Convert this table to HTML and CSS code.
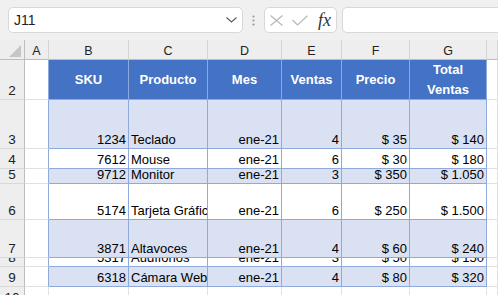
FILE: index.html
```html
<!DOCTYPE html>
<html lang="es">
<head>
<meta charset="utf-8">
<title>Hoja</title>
<link rel="stylesheet" href="styles.css">
</head>
<body>
<div class="toolbar">
  <div class="namebox">
    <span class="nb-text">J11</span>
    <svg class="chev" width="11" height="6" viewBox="0 0 11 6"><polyline points="0.5,0.5 5.5,5 10.5,0.5" fill="none" stroke="#5a5a5a" stroke-width="1.1"/></svg>
  </div>
  <div class="dots">
    <svg width="3" height="11" viewBox="0 0 3 11"><circle cx="1.5" cy="1.5" r="1.1" fill="#9a9a9a"/><circle cx="1.5" cy="5.5" r="1.1" fill="#9a9a9a"/><circle cx="1.5" cy="9.5" r="1.1" fill="#9a9a9a"/></svg>
  </div>
  <div class="fxbox">
    <svg class="ic-x" width="13" height="11" viewBox="0 0 13 11"><path d="M0.5 0.5 L12.5 10.5 M12.5 0.5 L0.5 10.5" stroke="#b8b8b8" stroke-width="1.2" fill="none"/></svg>
    <svg class="ic-ok" width="16" height="11" viewBox="0 0 16 11"><polyline points="0.5,5 5.5,10 15.5,0.8" stroke="#b8b8b8" stroke-width="1.2" fill="none"/></svg>
    <span class="fx">fx</span>
  </div>
  <div class="formula"></div>
</div>

<div class="sheet">
  <div class="corner"><svg width="24" height="19" viewBox="0 0 24 19"><polygon points="21,5 21,17 9,17" fill="#c6c6c6"/></svg></div>
  <div class="ch">A</div><div class="ch">B</div><div class="ch">C</div><div class="ch">D</div><div class="ch">E</div><div class="ch">F</div><div class="ch">G</div><div class="ch"></div>

  <div class="rh">2</div><div class="e ta"></div>
  <div class="th">SKU</div><div class="th">Producto</div><div class="th">Mes</div><div class="th">Ventas</div><div class="th">Precio</div><div class="th">Total<br>Ventas</div>
  <div class="e"></div>

  <div class="rh">3</div><div class="e ta"></div>
  <div class="td band r">1234</div><div class="td band">Teclado</div><div class="td band r">ene-21</div><div class="td band r">4</div><div class="td band r">$ 35</div><div class="td band r">$ 140</div>
  <div class="e"></div>

  <div class="rh">4</div><div class="e ta"></div>
  <div class="td r">7612</div><div class="td">Mouse</div><div class="td r">ene-21</div><div class="td r">6</div><div class="td r">$ 30</div><div class="td r">$ 180</div>
  <div class="e"></div>

  <div class="rh">5</div><div class="e ta"></div>
  <div class="td band r">9712</div><div class="td band">Monitor</div><div class="td band r">ene-21</div><div class="td band r">3</div><div class="td band r">$ 350</div><div class="td band r">$ 1.050</div>
  <div class="e"></div>

  <div class="rh">6</div><div class="e ta"></div>
  <div class="td r">5174</div><div class="td">Tarjeta Gráfica</div><div class="td r">ene-21</div><div class="td r">6</div><div class="td r">$ 250</div><div class="td r">$ 1.500</div>
  <div class="e"></div>

  <div class="rh">7</div><div class="e ta"></div>
  <div class="td band r">3871</div><div class="td band">Altavoces</div><div class="td band r">ene-21</div><div class="td band r">4</div><div class="td band r">$ 60</div><div class="td band r">$ 240</div>
  <div class="e"></div>

  <div class="rh">8</div><div class="e ta"></div>
  <div class="td r">5317</div><div class="td">Audífonos</div><div class="td r">ene-21</div><div class="td r">3</div><div class="td r">$ 50</div><div class="td r">$ 150</div>
  <div class="e"></div>

  <div class="rh">9</div><div class="e ta"></div>
  <div class="td band r">6318</div><div class="td band">Cámara Web</div><div class="td band r">ene-21</div><div class="td band r">4</div><div class="td band r">$ 80</div><div class="td band r">$ 320</div>
  <div class="e"></div>

  <div class="rh">10</div><div class="e"></div><div class="e"></div><div class="e"></div><div class="e"></div><div class="e"></div><div class="e"></div><div class="e"></div><div class="e"></div>
</div>
</body>
</html>
```

FILE: styles.css
```css
* { box-sizing: border-box; }

body {
  margin: 0;
  width: 498px;
  height: 295px;
  overflow: hidden;
  background: #f0f0f0;
  font-family: "Liberation Sans", Arial, sans-serif;
}

.toolbar {
  height: 40px;
  display: flex;
  align-items: flex-start;
  padding: 7px 0 0 8px;
  overflow: hidden;
  background: #f0f0f0;
}

.namebox {
  flex: none;
  width: 235px;
  height: 26px;
  background: #fff;
  border: 1px solid #d8d8d8;
  border-radius: 5px;
  display: flex;
  align-items: center;
  justify-content: space-between;
  padding: 0 5px 0 5px;
}

.nb-text {
  font-size: 14px;
  color: #222;
}

.dots {
  flex: none;
  width: 21px;
  height: 26px;
  display: flex;
  align-items: center;
  justify-content: center;
}

.fxbox {
  flex: none;
  width: 73px;
  height: 26px;
  background: #fff;
  border: 1px solid #d8d8d8;
  border-radius: 5px;
  display: flex;
  align-items: center;
  padding-left: 5px;
}

.ic-ok { margin-left: 9px; }

.fx {
  margin-left: 10px;
  font-family: "Liberation Serif", "DejaVu Serif", serif;
  font-style: italic;
  font-size: 18px;
  color: #333;
  line-height: 1;
  margin-top: -1px;
}

.formula {
  flex: none;
  width: 220px;
  height: 26px;
  margin-left: 5px;
  background: #fff;
  border: 1px solid #d8d8d8;
  border-radius: 5px;
}

.sheet {
  display: grid;
  grid-template-columns: 25px 24px 80px 79px 74px 60px 68px 77px 1fr;
  grid-template-rows: 20px 40px 49px 20px 15px 36px 38px 9px 20px 20px;
  background: #fff;
  font-size: 13px;
}

.sheet > div {
  border-right: 1px solid #e1e1e1;
  border-bottom: 1px solid #e1e1e1;
  overflow: hidden;
  white-space: nowrap;
  min-width: 0;
}

.sheet > .corner {
  background: #eeeeee;
  border-right: 1px solid #bdbdbd;
  border-bottom: 1px solid #bdbdbd;
  display: flex;
}

.sheet > .ch {
  background: #eeeeee;
  border-right: 1px solid #d4d4d4;
  border-bottom: 1px solid #bdbdbd;
  display: flex;
  align-items: center;
  justify-content: center;
  padding-top: 3px;
  font-size: 12.5px;
  color: #222;
}

.sheet > .rh {
  background: #eeeeee;
  border-right: 1px solid #bdbdbd;
  border-bottom: 1px solid #d8d8d8;
  display: flex;
  align-items: flex-end;
  justify-content: center;
  line-height: 16px;
  font-size: 13.5px;
  color: #222;
}

.sheet > .ta {
  border-right: 1px solid #8ea9db;
}

.sheet > .th {
  background: #4472c4;
  color: #fff;
  font-weight: bold;
  border-right: 1px solid #8ea9db;
  border-bottom: 1px solid #8ea9db;
  display: flex;
  align-items: center;
  justify-content: center;
  text-align: center;
  line-height: 20px;
  padding: 0 2px;
}

.sheet > .td {
  color: #000;
  border-right: 1px solid #8ea9db;
  border-bottom: 1px solid #8ea9db;
  display: flex;
  align-items: flex-end;
  line-height: 16px;
  padding: 0 2px;
}

.sheet > .band {
  background: #d9e1f2;
}

.sheet > .r {
  justify-content: flex-end;
}
```
